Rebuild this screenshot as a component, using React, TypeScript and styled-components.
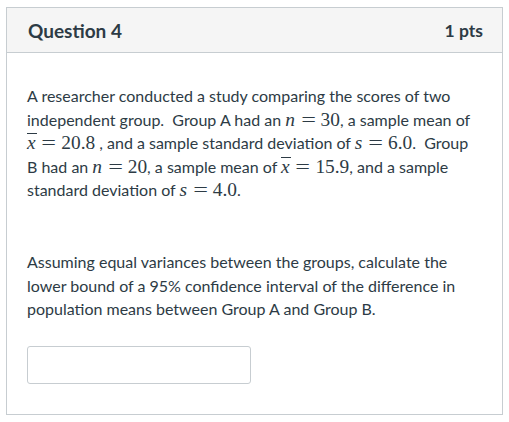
import styled, { createGlobalStyle } from "styled-components";

const GlobalStyle = createGlobalStyle`
  body {
    margin: 0;
    background: #fff;
    font-family: Lato, "Open Sans", sans-serif;
    color: #2d3b45;
  }
`;

const Page = styled.div`
  padding: 7px 7px 7px 6px;
`;

const Card = styled.div`
  width: 497px;
  height: 408px;
  box-sizing: border-box;
  border: 1px solid #c7cdd1;
  display: flex;
  flex-direction: column;
`;

const Header = styled.div`
  height: 45px;
  box-sizing: border-box;
  background: #f5f5f5;
  border-bottom: 1px solid #c7cdd1;
  display: flex;
  align-items: center;
  justify-content: space-between;
  padding: 0 19px 0 21px;
  font-size: 19px;
  font-weight: 700;
  color: #2d3b45;
`;

const Points = styled.span`
  font-size: 17.5px;
  color: #2d3b45;
`;

const Body = styled.div`
  padding: 31px 20px 0 20px;
  font-size: 16px;
  line-height: 23.6px;
`;

const Para = styled.p`
  margin: 0 0 ${(p: { $gap?: number }) => p.$gap ?? 0}px 0;
`;

const M = styled.span`
  font-family: "Liberation Serif", "Times New Roman", serif;
  font-size: 1.21em;
  line-height: 1;
  white-space: nowrap;
`;

const V = styled.i`
  font-style: italic;
  padding-right: 0.05em;
`;

const Eq = styled.span`
  display: inline-block;
  width: 0.78em;
  margin: 0 0.25em;
  text-align: center;
  transform: scaleX(1.35);
`;

const Bar = styled.span`
  display: inline-block;
  border-top: 1px solid #2d3b45;
  line-height: 0.9;
`;

const Answer = styled.input`
  margin-top: 25px;
  width: 224px;
  height: 38px;
  box-sizing: border-box;
  border: 1px solid #c7cdd1;
  border-radius: 3px;
  outline: none;
`;

function Math({ v, val, bar }: { v: string; val: string; bar?: boolean }) {
  return (
    <M>
      {bar ? <Bar><V>{v}</V></Bar> : <V>{v}</V>}
      <Eq>=</Eq>
      {val}
    </M>
  );
}

export default function App() {
  return (
    <Page>
      <GlobalStyle />
      <Card>
        <Header>
          <span>Question 4</span>
          <Points>1 pts</Points>
        </Header>
        <Body>
          <Para $gap={48}>
            A researcher conducted a study comparing the scores of two independent
            group.&nbsp; Group A had an <Math v="n" val="30" />, a sample mean of{" "}
            <Math v="x" val="20.8" bar /> , and a sample standard deviation of{" "}
            <Math v="s" val="6.0" />.&nbsp; Group B had an <Math v="n" val="20" />, a
            sample mean of <Math v="x" val="15.9" bar />, and a sample standard
            deviation of <Math v="s" val="4.0" />.
          </Para>
          <Para>
            Assuming equal variances between the groups, calculate the lower bound of
            a 95% confidence interval of the difference in population means between
            Group A and Group B.
          </Para>
          <Answer type="text" />
        </Body>
      </Card>
    </Page>
  );
}
